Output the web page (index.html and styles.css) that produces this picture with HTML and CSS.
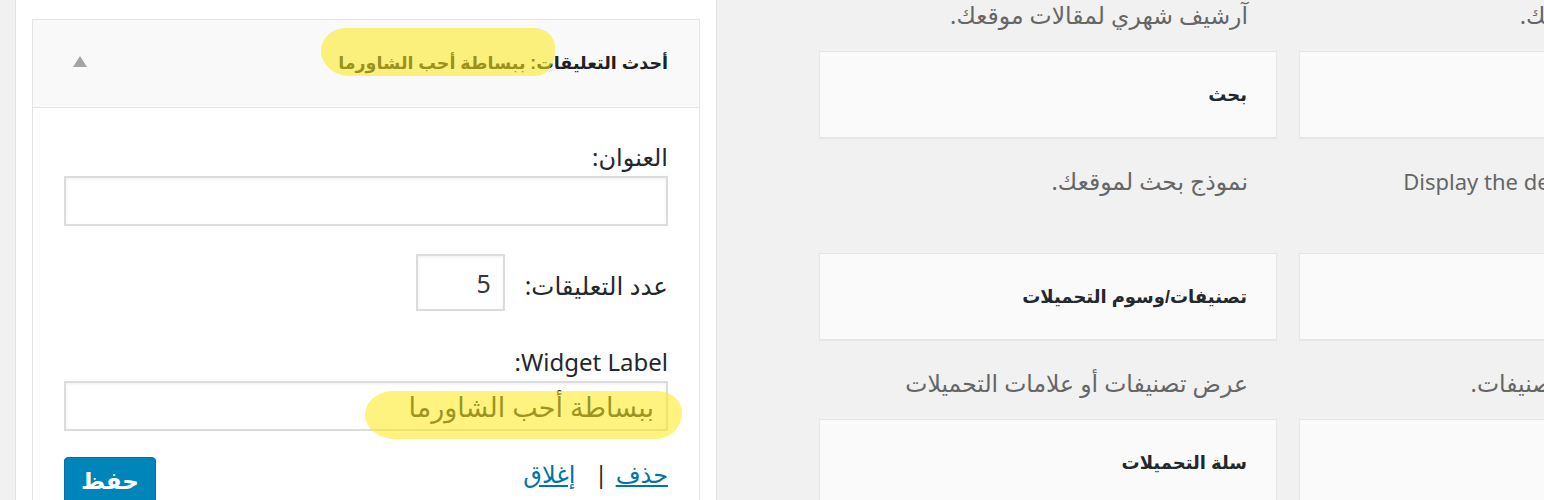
FILE: index.html
```html
<!DOCTYPE html>
<html lang="ar">
<head>
<meta charset="utf-8">
<title>الودجات</title>
<link rel="stylesheet" href="styles.css">
</head>
<body>
<div class="page">
  <aside class="sidebar-col">
    <div class="sidebar-panel">
      <div class="widget" dir="rtl">
        <div class="widget-top">
          <h3 class="widget-title">أحدث التعليقات: <span class="in-title">ببساطة أحب الشاورما</span></h3>
          <span class="toggle-arrow"></span>
          <span class="marker marker-head"></span>
        </div>
        <div class="widget-inside">
          <div class="field">
            <label class="field-label">العنوان:</label>
            <input class="widefat" type="text" value="">
          </div>
          <div class="field field-inline">
            <label class="field-label">عدد التعليقات:</label>
            <input class="tiny-text" type="text" value="5">
          </div>
          <div class="field">
            <label class="field-label label-latin">Widget Label:</label>
            <div class="input-wrap">
              <input class="widefat widefat-label" type="text" value="ببساطة أحب الشاورما">
              <span class="marker marker-input"></span>
            </div>
          </div>
          <div class="widget-actions">
            <div class="action-links"><a href="#" class="link">حذف</a><span class="sep">|</span><a href="#" class="link">إغلاق</a></div>
            <button class="btn-primary" type="button">حفظ</button>
          </div>
        </div>
      </div>
    </div>
  </aside>

  <main class="available">
    <div class="widget-grid" dir="rtl">
      <div class="cell"><p class="desc">آرشيف شهري لمقالات موقعك.</p></div>
      <div class="cell"><p class="desc">أحدث مقالات موقعك.</p></div>

      <div class="cell">
        <div class="card"><h4 class="card-title">بحث</h4></div>
        <p class="desc">نموذج بحث لموقعك.</p>
      </div>
      <div class="cell">
        <div class="card"><h4 class="card-title">WooCommerce</h4></div>
        <p class="desc desc-latin">Display the details of your shop<br>cart.</p>
      </div>

      <div class="cell">
        <div class="card"><h4 class="card-title">تصنيفات/وسوم التحميلات</h4></div>
        <p class="desc">عرض تصنيفات أو علامات التحميلات</p>
      </div>
      <div class="cell">
        <div class="card"><h4 class="card-title">تصنيفات</h4></div>
        <p class="desc">قائمة ومنسدلة بالتصنيفات.</p>
      </div>

      <div class="cell">
        <div class="card"><h4 class="card-title">سلة التحميلات</h4></div>
        <p class="desc">عرض سلة التحميلات</p>
      </div>
      <div class="cell">
        <div class="card"><h4 class="card-title">صفحات</h4></div>
        <p class="desc">قائمة بصفحات موقعك.</p>
      </div>
    </div>
  </main>
</div>
</body>
</html>
```

FILE: styles.css
```css
html, body {
  margin: 0;
  padding: 0;
  overflow: hidden;
  background: #f1f1f1;
}

body {
  font-family: "Noto Sans", "DejaVu Sans", sans-serif;
  color: #23282d;
}

.page {
  display: flex;
  align-items: flex-start;
  width: 1780px;
  height: 500px;
}

/* ---------- left sidebar ---------- */
.sidebar-col {
  padding-left: 15px;
  flex: 0 0 auto;
}

.sidebar-panel {
  width: 668px;
  background: #fff;
  border-left: 1px solid #e2e2e2;
  border-right: 1px solid #e2e2e2;
  padding: 19px 16px 40px;
  min-height: 500px;
  box-sizing: content-box;
}

.widget {
  border: 1px solid #e5e5e5;
  background: #fff;
  box-shadow: 0 1px 1px rgba(0, 0, 0, 0.04);
}

.widget-top {
  position: relative;
  height: 87px;
  background: #f9f9f9;
  border-bottom: 1px solid #e5e5e5;
  display: flex;
  align-items: center;
  justify-content: space-between;
  padding: 0 31px 0 40px;
}

.widget-title {
  margin: 0;
  font-family: "Liberation Sans", "DejaVu Sans", sans-serif;
  font-size: 17.5px;
  font-weight: 700;
  color: #1d2125;
  white-space: nowrap;
}

.in-title {
  color: #23282d;
}

.toggle-arrow {
  width: 0;
  height: 0;
  border-left: 7.5px solid transparent;
  border-right: 7.5px solid transparent;
  border-bottom: 11px solid #a0a5aa;
  margin-top: -5px;
}

.marker {
  position: absolute;
  background: rgba(252, 234, 20, 0.55);
  pointer-events: none;
}

.marker-head {
  left: 288px;
  top: 8px;
  width: 234px;
  height: 48px;
  border-radius: 26px 22px 20px 30px / 24px 20px 26px 26px;
}

.widget-inside {
  padding: 34px 31px 30px;
}

.field {
  margin-bottom: 28px;
}

.field-label {
  display: block;
  font-size: 24px;
  line-height: 30px;
  color: #23282d;
  margin-bottom: 4px;
}

.label-latin {
  font-size: 24px;
}

.widefat {
  display: block;
  width: 100%;
  height: 50px;
  box-sizing: border-box;
  border: 2px solid #dcdcdc;
  box-shadow: inset 0 1px 3px rgba(0, 0, 0, 0.07);
  background: #fff;
  padding: 0 12px;
  font-family: "Noto Sans", "DejaVu Sans", sans-serif;
  font-size: 27px;
  color: #2a2e33;
  direction: rtl;
  outline: none;
}

.field-inline {
  display: flex;
  align-items: center;
  gap: 20px;
  margin-bottom: 36px;
}

.field-inline .field-label {
  margin-bottom: 0;
  padding-top: 6px;
  font-size: 24.5px;
}

.tiny-text {
  width: 89px;
  height: 57px;
  box-sizing: border-box;
  border: 2px solid #dcdcdc;
  box-shadow: inset 0 1px 3px rgba(0, 0, 0, 0.07);
  padding: 0 12px;
  font-family: "Noto Sans", "DejaVu Sans", sans-serif;
  font-size: 25px;
  color: #32373c;
  text-align: right;
  direction: ltr;
  outline: none;
}

.input-wrap {
  position: relative;
}

.marker-input {
  left: 301px;
  top: 10px;
  width: 317px;
  height: 48px;
  border-radius: 28px 24px 26px 30px / 24px 22px 26px 24px;
}

.widget-actions {
  display: flex;
  justify-content: space-between;
  align-items: flex-start;
  margin-top: -2px;
}

.action-links {
  font-size: 24px;
  line-height: 30px;
  padding-top: 2px;
  color: #23282d;
}

.link {
  color: #0073aa;
  text-decoration: underline;
}

.sep {
  margin: 0 8px 0 19px;
}

.btn-primary {
  width: 92px;
  height: 48px;
  background: #0085ba;
  border: 1px solid #0073aa;
  border-radius: 4px;
  box-shadow: 0 1px 0 #006799;
  color: #fff;
  font-family: "Liberation Sans", "DejaVu Sans", sans-serif;
  font-size: 23px;
  font-weight: 700;
  padding: 0;
}

/* ---------- available widgets ---------- */
.available {
  padding-left: 102px;
  flex: 0 0 auto;
}

.widget-grid {
  display: grid;
  grid-template-columns: 458px 458px;
  column-gap: 22px;
  margin-top: -3px;
  direction: ltr;
}

.cell {
  direction: rtl;
}

.card {
  height: 87px;
  box-sizing: border-box;
  background: #fafafa;
  border: 1px solid #e5e5e5;
  box-shadow: 0 1px 1px rgba(0, 0, 0, 0.04);
  display: flex;
  align-items: center;
  padding: 0 29px;
}

.card-title {
  margin: 0;
  font-family: "Liberation Sans", "DejaVu Sans", sans-serif;
  font-size: 18px;
  font-weight: 700;
  color: #23282d;
}

.desc {
  margin: 0;
  padding: 25px 29px 18px;
  font-size: 23.5px;
  line-height: 36px;
  color: #666;
  white-space: nowrap;
}

.desc-latin {
  font-size: 22px;
}

.cell:nth-child(1) .desc,
.cell:nth-child(2) .desc {
  padding-top: 0;
}
```
